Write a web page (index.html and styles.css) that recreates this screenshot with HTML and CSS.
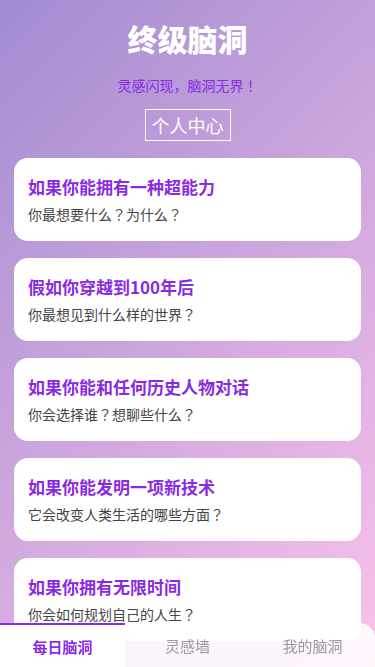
FILE: index.html
```html
<!DOCTYPE html>
<html lang="zh-CN">
<head>
<meta charset="utf-8">
<meta name="viewport" content="width=device-width, initial-scale=1">
<title>终级脑洞</title>
<link rel="stylesheet" href="styles.css">
</head>
<body>
<div class="page">
  <header class="header">
    <h1 class="title">终级脑洞</h1>
    <p class="slogan">灵感闪现，脑洞无界！</p>
    <button class="profile-btn">个人中心</button>
  </header>
  <main class="cards">
    <div class="card">
      <h2 class="card-title">如果你能拥有一种超能力</h2>
      <p class="card-sub">你最想要什么？为什么？</p>
    </div>
    <div class="card">
      <h2 class="card-title">假如你穿越到100年后</h2>
      <p class="card-sub">你最想见到什么样的世界？</p>
    </div>
    <div class="card">
      <h2 class="card-title">如果你能和任何历史人物对话</h2>
      <p class="card-sub">你会选择谁？想聊些什么？</p>
    </div>
    <div class="card">
      <h2 class="card-title">如果你能发明一项新技术</h2>
      <p class="card-sub">它会改变人类生活的哪些方面？</p>
    </div>
    <div class="card">
      <h2 class="card-title">如果你拥有无限时间</h2>
      <p class="card-sub">你会如何规划自己的人生？</p>
    </div>
  </main>
  <nav class="tabbar">
    <div class="tab tab-active">每日脑洞</div>
    <div class="tab">灵感墙</div>
    <div class="tab">我的脑洞</div>
  </nav>
</div>
</body>
</html>
```
FILE: styles.css
```css
* { box-sizing: border-box; }
html, body {
  margin: 0;
  padding: 0;
  height: 100%;
}
body {
  font-family: "Noto Sans CJK SC", "Noto Sans", sans-serif;
  background: linear-gradient(135deg, #a18cd1 0%, #fbc2eb 100%);
  min-height: 100vh;
  overflow: hidden;
}
.page {
  min-height: 100vh;
}
.header {
  display: flex;
  flex-direction: column;
  align-items: center;
  padding-top: 18px;
}
.title {
  margin: 0;
  font-size: 30px;
  line-height: 40px;
  font-weight: 900;
  color: #fff;
}
.slogan {
  margin: 17px 0 0;
  font-family: "Noto Sans CJK JP", "Noto Sans CJK SC", sans-serif;
  font-feature-settings: "locl" 0;
  font-size: 14px;
  line-height: 20px;
  color: #8a2be2;
}
.profile-btn {
  margin-top: 14px;
  font-family: inherit;
  font-size: 18px;
  line-height: 22px;
  padding: 4px 6px;
  color: #fff;
  background: transparent;
  border: 1px solid #fff;
  border-radius: 0;
}
.cards {
  display: flex;
  flex-direction: column;
  gap: 17px;
  padding: 17px 14px 0;
}
.card {
  background: #fff;
  border-radius: 14px;
  padding: 16px 14px 17px;
  height: 83px;
}
.card-title {
  margin: 0;
  font-size: 17px;
  line-height: 25px;
  font-weight: 700;
  color: #8a2be2;
}
.card-sub {
  margin: 5px 0 0;
  font-family: "Noto Sans CJK JP", "Noto Sans CJK SC", sans-serif;
  font-feature-settings: "locl" 0;
  font-size: 14px;
  line-height: 20px;
  color: #444;
}
.tabbar {
  position: fixed;
  left: 0;
  right: 0;
  bottom: 0;
  height: 44px;
  display: flex;
  background: rgba(255, 255, 255, 0.85);
  border-radius: 15px 15px 0 0;
}
.tab {
  flex: 1;
  display: flex;
  align-items: center;
  justify-content: center;
  font-size: 15px;
  color: #999;
}
.tab-active {
  background: #fff;
  color: #8a2be2;
  font-weight: 700;
  border-top: 2px solid #8a2be2;
}
```
